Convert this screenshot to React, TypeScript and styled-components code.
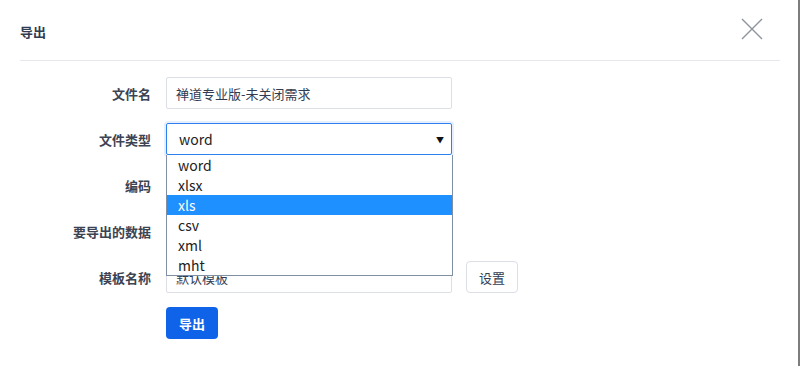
import styled, { createGlobalStyle } from 'styled-components';

const GlobalStyle = createGlobalStyle`
  html, body {
    margin: 0;
    padding: 0;
    background: #fff;
  }
  body {
    font-family: "Noto Sans CJK SC", "Noto Sans", sans-serif;
    font-size: 13px;
    color: #313c52;
  }
`;

const FILE_TYPES = ['word', 'xlsx', 'xls', 'csv', 'xml', 'mht'];
const ACTIVE_TYPE = 'xls';

const CloseIcon = () => (
  <svg width="22" height="22" viewBox="0 0 22 22" fill="none">
    <path d="M1 1L21 21M21 1L1 21" stroke="#8d929c" strokeWidth="1.4" />
  </svg>
);

const App = () => {
  return (
    <>
      <GlobalStyle />
      <Dialog>
        <Header>
          <Title>导出</Title>
          <CloseButton aria-label="close">
            <CloseIcon />
          </CloseButton>
        </Header>
        <Form>
          <Row>
            <Label>文件名</Label>
            <Input defaultValue="禅道专业版-未关闭需求" />
          </Row>
          <Row>
            <Label>文件类型</Label>
            <SelectWrap>
              <FakeSelect>
                <span>word</span>
                <Caret>▼</Caret>
              </FakeSelect>
              <OptionList>
                {FILE_TYPES.map((type) => (
                  <OptionItem key={type} $active={type === ACTIVE_TYPE}>
                    {type}
                  </OptionItem>
                ))}
              </OptionList>
            </SelectWrap>
          </Row>
          <Row>
            <Label>编码</Label>
            <Input defaultValue="UTF-8" />
          </Row>
          <Row>
            <Label>要导出的数据</Label>
            <Input defaultValue="全部记录" />
          </Row>
          <Row>
            <Label>模板名称</Label>
            <Input defaultValue="默认模板" />
            <GhostButton>设置</GhostButton>
          </Row>
          <Row>
            <Label />
            <PrimaryButton>导出</PrimaryButton>
          </Row>
        </Form>
      </Dialog>
    </>
  );
};

const Dialog = styled.div`
  position: relative;
  width: 800px;
  height: 366px;
  box-sizing: border-box;
  border-right: 2px solid #7d7d7d;
  background: #fff;
`;

const Header = styled.div`
  display: flex;
  align-items: center;
  justify-content: space-between;
  height: 61px;
  margin: 0 18px 0 20px;
  border-bottom: 1px solid #e6e8ec;
  box-sizing: border-box;
`;

const Title = styled.div`
  font-size: 13px;
  font-weight: 700;
  color: #313c52;
  padding-top: 2px;
`;

const CloseButton = styled.button`
  display: flex;
  padding: 0;
  margin-right: 17px;
  margin-top: -3px;
  border: none;
  background: none;
`;

const Form = styled.div`
  display: flex;
  flex-direction: column;
  gap: 14px;
  padding: 16px 0 0 20px;
`;

const Row = styled.div`
  display: flex;
  align-items: center;
  gap: 15px;
  height: 32px;
`;

const Label = styled.div`
  width: 131px;
  text-align: right;
  font-weight: 700;
  color: #3c4353;
  font-size: 13px;
`;

const Input = styled.input`
  width: 286px;
  height: 32px;
  box-sizing: border-box;
  border: 1px solid #dcdfe5;
  border-radius: 2px;
  padding: 0 9px;
  font-family: inherit;
  font-size: 13px;
  color: #313c52;
  outline: none;
`;

const SelectWrap = styled.div`
  position: relative;
  width: 286px;
  height: 32px;
`;

const FakeSelect = styled.div`
  display: flex;
  align-items: center;
  justify-content: space-between;
  height: 32px;
  box-sizing: border-box;
  padding: 0 7px 0 12px;
  border: 1px solid #2e7ff0;
  border-radius: 2px;
  box-shadow: 0 0 0 2px rgba(46, 127, 240, 0.12);
  font-size: 14px;
  color: #222;
`;

const Caret = styled.span`
  font-size: 8px;
  color: #111;
`;

const OptionList = styled.ul`
  position: absolute;
  top: 32px;
  left: 0;
  width: 287px;
  box-sizing: border-box;
  margin: 0;
  padding: 0;
  list-style: none;
  background: #fff;
  border: 1px solid #7f8fa4;
  border-top: none;
  z-index: 2;
`;

const OptionItem = styled.li<{ $active: boolean }>`
  height: 20px;
  line-height: 20px;
  padding-left: 11px;
  font-size: 14px;
  color: ${({ $active }) => ($active ? '#fff' : '#222')};
  background: ${({ $active }) => ($active ? '#1e90ff' : 'transparent')};
`;

const GhostButton = styled.button`
  width: 52px;
  height: 32px;
  margin-left: -1px;
  border: 1px solid #dcdfe5;
  border-radius: 4px;
  background: #fff;
  font-family: inherit;
  font-size: 13px;
  color: #313c52;
`;

const PrimaryButton = styled.button`
  width: 52px;
  height: 32px;
  border: none;
  border-radius: 4px;
  background: #0f63e8;
  color: #fff;
  font-family: inherit;
  font-size: 13px;
  font-weight: 700;
`;

export default App;
